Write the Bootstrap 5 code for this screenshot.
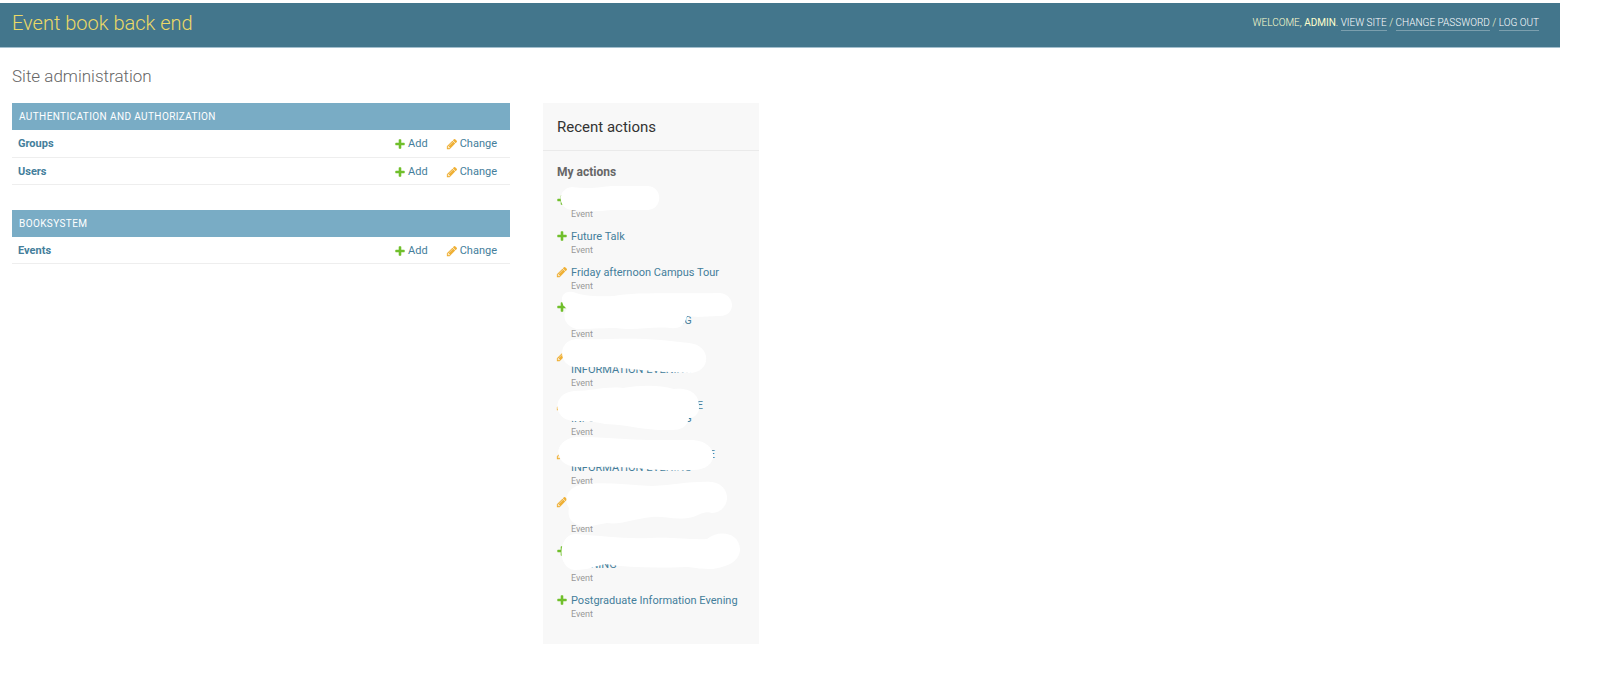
<!DOCTYPE html>
<html lang="en">
<head>
<meta charset="utf-8">
<meta name="viewport" content="width=device-width, initial-scale=1">
<title>Site administration | Event book back end</title>
<link href="https://cdn.jsdelivr.net/npm/bootstrap@5.3.0/dist/css/bootstrap.min.css" rel="stylesheet">
<style>
  body { font-family: Roboto, "Liberation Sans", sans-serif; font-size: 11px; line-height: 14px; color: #333; background: #fff; }
  a { color: #447e9b; text-decoration: none; }
  .page-wrap { padding: 3px 37px 12px 0; }
  .site-header { background: #43768c; border-bottom: 1px solid #a3bfce; min-height: 45px; padding: 0 21px 4px 12px; }
  .site-title { font-size: 20px; line-height: 26px; font-weight: 300; }
  .site-title a { color: #ecd966; }
  .user-tools { font-size: 10px; line-height: 14px; font-weight: 300; color: #ffc; text-transform: uppercase; }
  .user-tools a { color: #fff; border-bottom: 1px solid #7b9fae; padding-bottom: 2px; }
  .content-area { padding: 17px 12px 0; }
  .page-title { font-size: 17px; line-height: 22px; font-weight: 300; color: #666; margin-bottom: 16px; }
  .dashboard { column-gap: 33px; }
  .app-list { flex: 0 1 498px; }
  .app-module { margin-bottom: 25px; }
  .app-module caption { caption-side: top; background: #79acc5; font-size: 10px; line-height: 15px; padding: 6px 7px; text-transform: uppercase; letter-spacing: 0.04em; }
  .app-module caption a { color: #fff; }
  .app-module th, .app-module td { height: 27px; padding: 2px 6px 0; border-bottom: 1px solid #eee; line-height: 14px; white-space: nowrap; }
  .app-module td { width: 1px; }
  .app-module td:last-child { padding: 2px 13px 0 12px; }
  .app-module td a { column-gap: 2px; }
  .glyph { width: 12px; height: 12px; flex: none; }
  .recent { flex: 0 0 216px; background: #f8f8f8; }
  .recent h2 { font-size: 15px; line-height: 19px; font-weight: 400; padding: 15px 14px 13px; border-bottom: 1px solid #eaeaea; margin: 0; }
  .recent h3 { font-size: 12px; line-height: 14px; font-weight: 700; color: #666; margin: 14px 14px 15px; }
  .action-list { min-height: 426px; padding: 0 14px 0 13px; margin: 0 0 24px; }
  .action-list li { column-gap: 3px; }
  .action-list a { display: block; line-height: 13px; }
  .kind { display: block; font-size: 9px; line-height: 12px; color: #999; margin-top: 1px; }
  .line { display: block; min-height: 13px; }
  .line-end { text-align: right; }
  .end-near { width: 132px; }
  .end-far { width: 144px; }
  .strokes { position: absolute; inset: 0; width: 216px; height: 541px; pointer-events: none; }
</style>
</head>
<body>
<svg class="d-none" aria-hidden="true">
  <symbol id="add" viewBox="0 0 1792 1792"><path fill="#70bf2b" d="M1600 796v192q0 40-28 68t-68 28h-416v416q0 40-28 68t-68 28h-192q-40 0-68-28t-28-68v-416h-416q-40 0-68-28t-28-68v-192q0-40 28-68t68-28h416v-416q0-40 28-68t68-28h192q40 0 68 28t28 68v416h416q40 0 68 28t28 68z"/></symbol>
  <symbol id="change" viewBox="0 0 1792 1792"><path fill="#efb035" d="M491 1536l91-91-235-235-91 91v107h128v128h107zm523-928q0-22-22-22-10 0-17 7l-542 542q-7 7-7 17 0 22 22 22 10 0 17-7l542-542q7-7 7-17zm-54-192l416 416-832 832h-416v-416zm683 96q0 53-37 90l-166 166-416-416 166-165q36-38 90-38 53 0 91 38l235 234q37 39 37 91z"/></symbol>
</svg>
<div class="page-wrap">
  <header class="site-header d-flex flex-wrap align-items-center justify-content-between">
    <h1 class="site-title m-0"><a href="#">Event book back end</a></h1>
    <div class="user-tools">Welcome, <strong>admin</strong>. <a href="#">View site</a> / <a href="#">Change password</a> / <a href="#">Log out</a></div>
  </header>
  <main class="content-area">
    <h1 class="page-title">Site administration</h1>
    <div class="dashboard d-flex align-items-start">
      <div class="app-list">
        <table class="app-module w-100">
          <caption><a href="#">Authentication and Authorization</a></caption>
          <tbody>
            <tr><th scope="row"><a href="#">Groups</a></th>
              <td><a href="#" class="d-flex align-items-center"><svg class="glyph"><use href="#add"/></svg>Add</a></td>
              <td><a href="#" class="d-flex align-items-center"><svg class="glyph"><use href="#change"/></svg>Change</a></td></tr>
            <tr><th scope="row"><a href="#">Users</a></th>
              <td><a href="#" class="d-flex align-items-center"><svg class="glyph"><use href="#add"/></svg>Add</a></td>
              <td><a href="#" class="d-flex align-items-center"><svg class="glyph"><use href="#change"/></svg>Change</a></td></tr>
          </tbody>
        </table>
        <table class="app-module w-100">
          <caption><a href="#">Booksystem</a></caption>
          <tbody>
            <tr><th scope="row"><a href="#">Events</a></th>
              <td><a href="#" class="d-flex align-items-center"><svg class="glyph"><use href="#add"/></svg>Add</a></td>
              <td><a href="#" class="d-flex align-items-center"><svg class="glyph"><use href="#change"/></svg>Change</a></td></tr>
          </tbody>
        </table>
      </div>
      <aside class="recent position-relative">
        <h2>Recent actions</h2>
        <h3>My actions</h3>
        <ul class="action-list list-unstyled d-flex flex-column justify-content-between">
          <li class="d-flex"><svg class="glyph"><use href="#add"/></svg><div><span class="line"></span><span class="kind">Event</span></div></li>
          <li class="d-flex"><svg class="glyph"><use href="#add"/></svg><div><a href="#">Future Talk</a><span class="kind">Event</span></div></li>
          <li class="d-flex"><svg class="glyph"><use href="#change"/></svg><div><a href="#">Friday afternoon Campus Tour</a><span class="kind">Event</span></div></li>
          <li class="d-flex"><svg class="glyph"><use href="#add"/></svg><div><a href="#"><span class="line"></span><span class="line">INFORMATION EVENING</span></a><span class="kind">Event</span></div></li>
          <li class="d-flex"><svg class="glyph"><use href="#change"/></svg><div><a href="#"><span class="line"></span><span class="line">INFORMATION EVENING</span></a><span class="kind">Event</span></div></li>
          <li class="d-flex"><svg class="glyph"><use href="#change"/></svg><div><a href="#"><span class="line line-end end-near">E</span><span class="line">INFORMATION EVENING</span></a><span class="kind">Event</span></div></li>
          <li class="d-flex"><svg class="glyph"><use href="#change"/></svg><div><a href="#"><span class="line line-end end-far">E</span><span class="line">INFORMATION EVENING</span></a><span class="kind">Event</span></div></li>
          <li class="d-flex"><svg class="glyph"><use href="#change"/></svg><div><span class="line"></span><span class="line"></span><span class="kind">Event</span></div></li>
          <li class="d-flex"><svg class="glyph"><use href="#add"/></svg><div><a href="#"><span class="line"></span><span class="line">EVENING</span></a><span class="kind">Event</span></div></li>
          <li class="d-flex"><svg class="glyph"><use href="#add"/></svg><div><a href="#">Postgraduate Information Evening</a><span class="kind">Event</span></div></li>
        </ul>
        <!-- White brush strokes that hide private event names -->
        <svg class="strokes" viewBox="543 103 216 541" aria-hidden="true">
          <g fill="#fff">
            <path d="M572 187C584 189 596 188 611 186H648C663 187 663 209 648 210H611C595 212 585 211 572 210C557 209 557 188 572 187Z"/>
            <path d="M573 292C583 296 598 297 614 296C634 292 665 294 720 293C736 295 736 316 720 316C706 316 700 318 687 316C685 325 680 329 670 328C651 326 636 331 616 328C600 328 590 329 577 329C566 327 561 316 567 309C559 303 560 290 573 292Z"/>
            <path d="M576 339C603 340 631 337 661 340L689 343C712 345 712 373 689 373C666 372 636 370 613 367H576C559 367 556 341 576 339Z"/>
            <path d="M574 391C594 391 604 386 623 388C642 385 659 385 674 389C694 387 700 398 699 408C699 414 694 418 689 418C687 427 681 430 672 430C646 431 630 425 605 424C592 421 582 421 573 421C552 419 552 393 574 391Z"/>
            <path d="M576 437C608 437 626 440 652 440H693C720 442 720 470 693 470C675 471 655 470 636 468C615 466 596 467 576 467C553 465 552 440 576 437Z"/>
            <path d="M585 484C605 482 628 485 652 486C675 485 692 481 712 482C733 485 731 512 712 513C703 510 698 517 688 518C673 520 664 516 652 517C633 519 621 525 607 523L586 527C571 525 567 517 569 508C563 499 567 486 585 484Z"/>
            <path d="M575 534C605 536 621 539 650 538C676 537 691 540 707 539C717 530 739 531 740 549C740 562 726 567 713 569C700 569 697 568 687 567C656 568 629 568 606 564C595 566 589 570 575 570C557 569 557 535 575 534Z"/>
          </g>
        </svg>
      </aside>
    </div>
  </main>
</div>
<script src="https://cdn.jsdelivr.net/npm/bootstrap@5.3.0/dist/js/bootstrap.bundle.min.js"></script>
</body>
</html>
